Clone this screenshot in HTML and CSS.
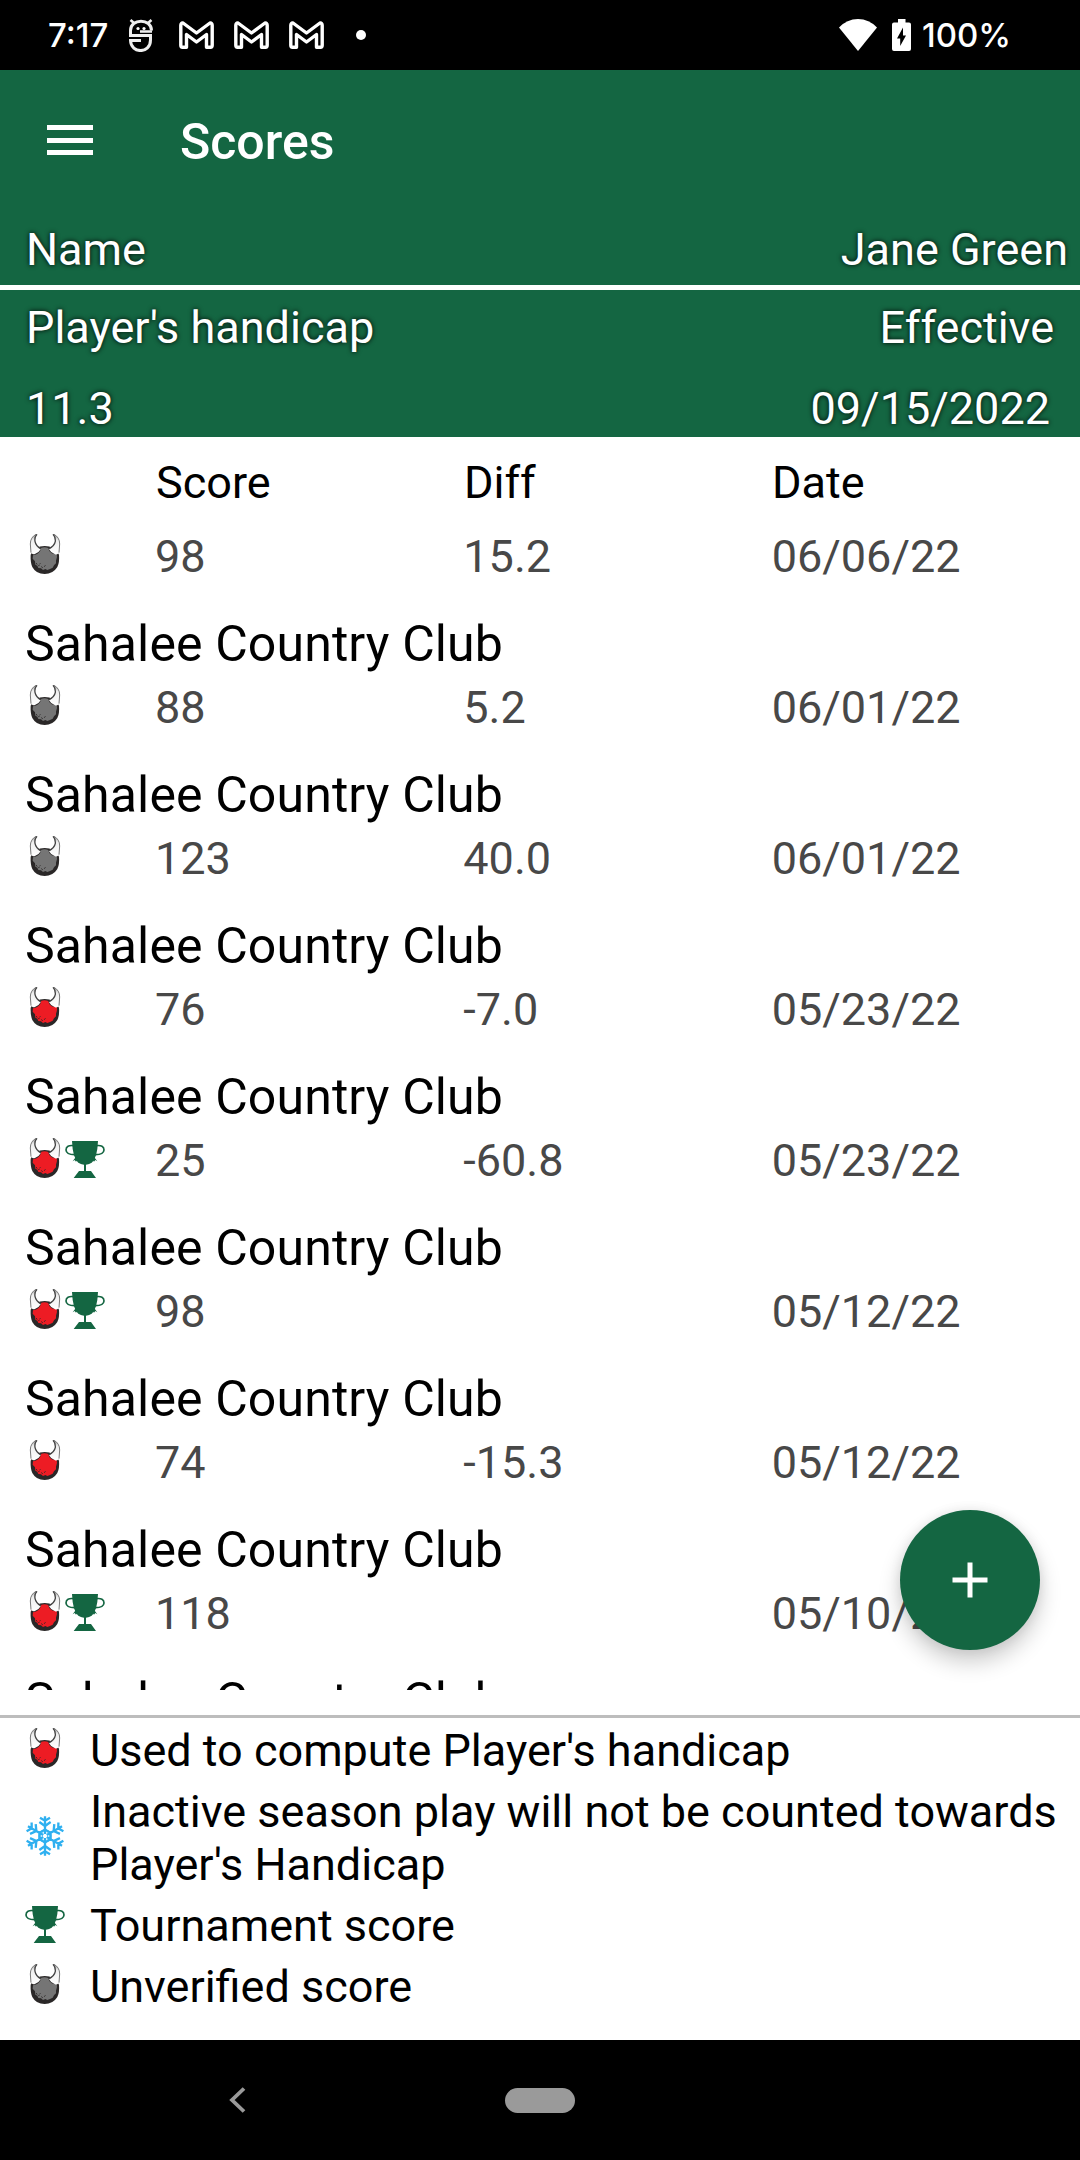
FILE: index.html
```html
<!DOCTYPE html>
<html lang="en">
<head>
    <meta charset="UTF-8">
    <meta name="viewport" content="width=device-width, initial-scale=1.0">
    <title>Scores</title>
    <link rel="stylesheet" href="styles.css">
</head>
<body>

<!-- shared icons -->
<svg class="icon-defs" width="0" height="0">
    <linearGradient id="horn" x1="0" y1="0" x2="0" y2="1">
        <stop offset="0" stop-color="#999"/>
        <stop offset="0.3" stop-color="#eee"/>
        <stop offset="1" stop-color="#fff"/>
    </linearGradient>
    <symbol id="ball" viewBox="0 0 120 120">
        <path d="M17 62 Q30 36 59 36 Q88 36 102 62 Q104 84 97 99 Q84 120 59 120 Q33 120 22 99 Q16 86 17 62 Z" fill="#2a2727"/>
        <path class="ball-face" d="M47 42 Q59 37 70 42 Q71 52 80 58 Q87 61 95 56 Q98 70 93 80 L93 88 L87 94 L83 101 L75 105 L67 108 L61 105 L54 108 L48 103 L40 102 L37 95 L31 92 L30 82 L23 74 L24 64 Q38 62 45 52 Q48 48 47 42 Z"/>
        <path d="M33 88 l4 3 M40 95 l4 -2 M49 98 l4 3 M58 98 l3 -4 M45 88 l2 2" stroke="#2a2727" stroke-width="3"/>
        <path d="M34 1 Q16 10 16 30 L18 54 Q22 64 31 59 Q42 56 47 46 Q32 38 30 22 Q28 9 37 0 Z" fill="url(#horn)"/>
        <path d="M33 1 Q16 10 16 30 L18 56" fill="none" stroke="#777" stroke-width="3"/>
        <path d="M36 1 Q28 9 30 22 Q33 37 48 44" fill="none" stroke="#444" stroke-width="4"/>
        <path d="M86 1 Q104 10 104 30 L102 54 Q97 65 89 60 Q77 56 72 46 Q89 38 91 22 Q92 9 83 0 Z" fill="url(#horn)"/>
        <path d="M87 1 Q104 10 104 30 L102 56" fill="none" stroke="#777" stroke-width="3"/>
        <path d="M84 1 Q92 9 91 22 Q88 37 71 44" fill="none" stroke="#444" stroke-width="4"/>
    </symbol>
    <symbol id="trophy" viewBox="0 0 120 120">
        <path d="M21 9 H99 Q97 60 80 74 Q73 79 63 80 V99 H78 L93 120 H26 L42 99 H57 V80 Q47 79 40 74 Q23 60 21 9 Z" fill="#146642"/>
        <path d="M27 23 Q3 20 3 36 Q4 51 32 50 M93 23 Q117 20 117 36 Q116 51 88 50" fill="none" stroke="#146642" stroke-width="5"/>
        <path d="M33 56 L23 70 L29 66 L33 71 L40 62 Z M87 56 L97 70 L91 66 L87 71 L80 62 Z" fill="#146642"/>
    </symbol>
    <symbol id="snow" viewBox="0 0 120 120">
        <g id="arm" fill="none" stroke="#2fb0f0" stroke-width="7">
            <path d="M60 54 V1 M45 5 L60 14 L75 5 M43 18 L60 30 L77 18 M50 47 L60 40 L70 47"/>
        </g>
        <use href="#arm" transform="rotate(60 60 60)"/>
        <use href="#arm" transform="rotate(120 60 60)"/>
        <use href="#arm" transform="rotate(180 60 60)"/>
        <use href="#arm" transform="rotate(240 60 60)"/>
        <use href="#arm" transform="rotate(300 60 60)"/>
    </symbol>
    <symbol id="mail" viewBox="0 0 35 28">
        <path d="M4 2 L17.5 12 L31 2 Q33.2 1.8 33.2 4.5 V24.2 Q33.2 26.2 31.5 26.2 H27.5 V13.5 L17.5 21 L7.5 13.5 V26.2 H3.5 Q1.8 26.2 1.8 24.2 V4.5 Q1.8 1.8 4 2 Z" fill="none" stroke="#fff" stroke-width="3.4" stroke-linejoin="round"/>
    </symbol>
</svg>

<div class="status-bar">
    <span class="clock">7:17</span>
    <svg class="status-face" width="24" height="34" viewBox="0 0 24 34">
        <path d="M22.5 12.5 C22.5 0 1.5 0 1.5 12.5 V17.5 H21.5 V22 C21.5 36 2 36 1.5 22.5 H12" fill="none" stroke="#eee" stroke-width="3"/>
        <path d="M1.5 2 L5 5 M22.5 2 L19 5 M11 13.5 H23" stroke="#eee" stroke-width="2.6"/>
        <circle cx="9" cy="10.5" r="1.6" fill="#fff"/>
        <circle cx="15" cy="10.5" r="1.6" fill="#fff"/>
    </svg>
    <svg class="status-mail" width="35" height="28"><use href="#mail"/></svg>
    <svg class="status-mail" width="35" height="28"><use href="#mail"/></svg>
    <svg class="status-mail" width="35" height="28"><use href="#mail"/></svg>
    <span class="status-dot"></span>
    <svg class="status-wifi" width="38" height="32" viewBox="0 0 38 32">
        <path d="M0 8.5 Q8 0 19 0 Q30 0 38 8.5 L19 32 Z" fill="#fff"/>
    </svg>
    <svg class="status-battery" width="19" height="32" viewBox="0 0 19 32">
        <path d="M6 0 H13.5 V3.5 H17 Q19 3.5 19 5.5 V30 Q19 32 17 32 H2 Q0 32 0 30 V5.5 Q0 3.5 2 3.5 H6 Z" fill="#fff"/>
        <path d="M11 8.5 L5 19.5 H8.2 V27 L14 16.5 H11 Z" fill="#000"/>
    </svg>
    <span class="battery-text">100%</span>
</div>

<div class="app-bar">
    <div class="menu-button"><span></span><span></span><span></span></div>
    <div class="title">Scores</div>
</div>

<div class="player-name">
    <div>Name</div>
    <div>Jane Green</div>
</div>
<div class="handicap">
    <div class="handicap-row">
        <div>Player's handicap</div>
        <div>Effective</div>
    </div>
    <div class="handicap-row handicap-values">
        <div>11.3</div>
        <div>09/15/2022</div>
    </div>
</div>

<div class="columns">
    <div></div>
    <div>Score</div>
    <div>Diff</div>
    <div>Date</div>
</div>

<div class="score-list">
    <div class="score-row">
        <div class="icons"><svg class="icon unverified"><use href="#ball"/></svg></div>
        <div>98</div><div>15.2</div><div>06/06/22</div>
    </div>
    <div class="club">Sahalee Country Club</div>
    <div class="score-row">
        <div class="icons"><svg class="icon unverified"><use href="#ball"/></svg></div>
        <div>88</div><div>5.2</div><div>06/01/22</div>
    </div>
    <div class="club">Sahalee Country Club</div>
    <div class="score-row">
        <div class="icons"><svg class="icon unverified"><use href="#ball"/></svg></div>
        <div>123</div><div>40.0</div><div>06/01/22</div>
    </div>
    <div class="club">Sahalee Country Club</div>
    <div class="score-row">
        <div class="icons"><svg class="icon used"><use href="#ball"/></svg></div>
        <div>76</div><div>-7.0</div><div>05/23/22</div>
    </div>
    <div class="club">Sahalee Country Club</div>
    <div class="score-row">
        <div class="icons"><svg class="icon used"><use href="#ball"/></svg><svg class="icon"><use href="#trophy"/></svg></div>
        <div>25</div><div>-60.8</div><div>05/23/22</div>
    </div>
    <div class="club">Sahalee Country Club</div>
    <div class="score-row">
        <div class="icons"><svg class="icon used"><use href="#ball"/></svg><svg class="icon"><use href="#trophy"/></svg></div>
        <div>98</div><div></div><div>05/12/22</div>
    </div>
    <div class="club">Sahalee Country Club</div>
    <div class="score-row">
        <div class="icons"><svg class="icon used"><use href="#ball"/></svg></div>
        <div>74</div><div>-15.3</div><div>05/12/22</div>
    </div>
    <div class="club">Sahalee Country Club</div>
    <div class="score-row">
        <div class="icons"><svg class="icon used"><use href="#ball"/></svg><svg class="icon"><use href="#trophy"/></svg></div>
        <div>118</div><div></div><div>05/10/22</div>
    </div>
    <div class="club">Sahalee Country Club</div>
</div>

<div class="legend">
    <div class="legend-item">
        <svg class="icon used"><use href="#ball"/></svg>
        <div>Used to compute Player's handicap</div>
    </div>
    <div class="legend-item">
        <svg class="icon"><use href="#snow"/></svg>
        <div>Inactive season play will not be counted towards Player's Handicap</div>
    </div>
    <div class="legend-item">
        <svg class="icon"><use href="#trophy"/></svg>
        <div>Tournament score</div>
    </div>
    <div class="legend-item">
        <svg class="icon unverified"><use href="#ball"/></svg>
        <div>Unverified score</div>
    </div>
</div>

<div class="nav-bar">
    <svg class="nav-back" width="17" height="26" viewBox="0 0 17 26">
        <path d="M15 1.5 L3 13 L15 24.5" fill="none" stroke="#9a9a9a" stroke-width="3.8"/>
    </svg>
    <div class="nav-home"></div>
</div>

<div class="add-button">
    <svg width="36" height="36" viewBox="0 0 36 36">
        <path d="M18 0.5 V35.5 M0.5 18 H35.5" stroke="#fff" stroke-width="5"/>
    </svg>
</div>

</body>
</html>
```
FILE: styles.css
```css
* {
    box-sizing: border-box;
}

body {
    margin: 0;
    width: 1080px;
    height: 2160px;
    display: flex;
    flex-direction: column;
    overflow: hidden;
    position: relative;
    font-family: Roboto, sans-serif;
    font-size: 45px;
    line-height: 53px;
    color: #000;
    background-color: #fff;
}

svg {
    display: block;
    flex-shrink: 0;
}

.icon-defs {
    position: absolute;
}

.icon {
    width: 40px;
    height: 40px;
}

.used {
    fill: #ed1c24;
}

.unverified {
    fill: #757575;
}

/* status bar */
.status-bar {
    height: 70px;
    flex-shrink: 0;
    display: flex;
    align-items: center;
    padding-left: 48px;
    padding-right: 69px;
    background-color: #000;
    color: #fff;
    font-family: Inter, sans-serif;
    font-size: 33px;
    font-weight: 500;
}

.clock {
    width: 81px;
}

.status-face {
    width: 24px;
    margin-right: 26px;
}

.status-mail {
    margin-right: 20px;
}

.status-dot {
    width: 10px;
    height: 10px;
    margin-left: 12px;
    margin-right: auto;
    border-radius: 50%;
    background-color: #fff;
}

.status-wifi {
    margin-right: 15px;
}

.status-battery {
    margin-right: 11px;
}

.battery-text {
    width: 89px;
    white-space: nowrap;
}

/* header */
.app-bar {
    height: 140px;
    flex-shrink: 0;
    display: flex;
    align-items: center;
    padding-left: 47px;
    background-color: #146642;
}

.menu-button {
    display: flex;
    flex-direction: column;
    gap: 7.5px;
    width: 46px;
    margin-right: 87px;
}

.menu-button span {
    height: 5px;
    background-color: #fff;
}

.title {
    padding-top: 4px;
    font-size: 50px;
    font-weight: 500;
    color: #fff;
}

.player-name, .handicap-row {
    display: flex;
    justify-content: space-between;
    color: #fff;
    text-shadow: 0 0 5px #000;
}

.player-name {
    height: 80px;
    flex-shrink: 0;
    padding: 13px 12px 0 26px;
    border-bottom: 5px solid #fff;
    background-color: #146642;
}

.handicap {
    height: 147px;
    flex-shrink: 0;
    padding: 11px 26px 0 26px;
    background-color: #146642;
}

.handicap-values {
    margin-top: 28px;
    padding-right: 4px;
}

/* scores */
.columns, .score-row {
    display: grid;
    grid-template-columns: 130px 1fr 1fr 1fr;
    padding-left: 25px;
}

.columns {
    flex-shrink: 0;
    height: 93px;
    padding-top: 19px;
    padding-left: 26px;
}

.score-list {
    height: 1160px;
    flex-shrink: 0;
    overflow: hidden;
}

.score-row {
    height: 53px;
    color: #484848;
}

.icons {
    display: flex;
    padding-top: 4px;
}

.club {
    font-size: 50px;
    line-height: 59px;
    letter-spacing: 0.12px;
    margin: 32px 0 7px 25px;
}

/* legend */
.legend {
    flex: 1;
    margin-top: 25px;
    border-top: 3px solid #bdbdbd;
    padding-top: 2px;
}

.legend-item {
    display: flex;
    align-items: center;
    padding: 4px 20px 4px 25px;
}

.legend-item .icon {
    margin-right: 25px;
    margin-bottom: 5px;
}

/* bottom navigation */
.nav-bar {
    height: 120px;
    flex-shrink: 0;
    display: flex;
    align-items: center;
    padding-left: 229px;
    background-color: #000;
}

.nav-back {
    margin-right: 259px;
}

.nav-home {
    width: 70px;
    height: 25px;
    border-radius: 13px;
    background-color: #9a9a9a;
}

.add-button {
    position: absolute;
    left: 900px;
    top: 1510px;
    width: 140px;
    height: 140px;
    display: flex;
    align-items: center;
    justify-content: center;
    border-radius: 50%;
    background-color: #146642;
    box-shadow: 0 12px 22px rgba(0, 0, 0, 0.2), 0 0 12px rgba(0, 0, 0, 0.08);
}
```
